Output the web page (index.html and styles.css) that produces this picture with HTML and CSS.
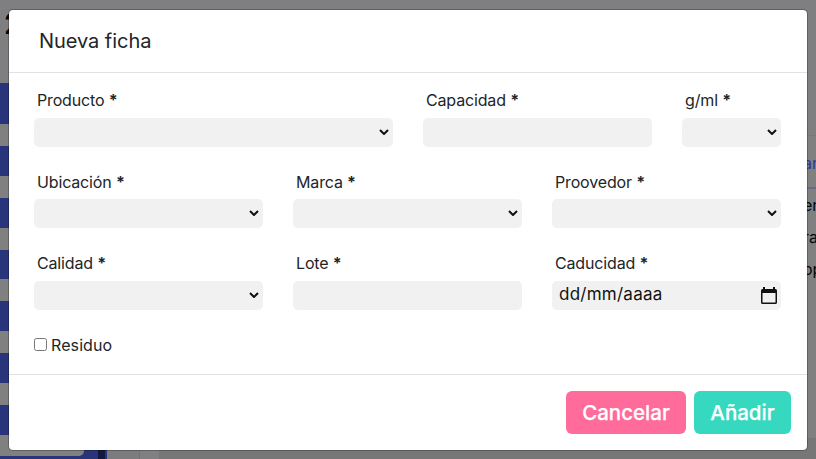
FILE: index.html
```html
<!DOCTYPE html>
<html lang="es">
<head>
<meta charset="utf-8">
<title>Nueva ficha</title>
<link rel="stylesheet" href="styles.css">
</head>
<body>
<div class="page">
  <aside class="sidebar">
    <div class="sidebar-panel">
      <span class="page-mark">2</span>
      <nav class="side-nav">
        <i class="side-link side-link-first"></i><i class="side-link"></i><i class="side-link"></i><i class="side-link"></i><i class="side-link"></i><i class="side-link"></i><i class="side-link"></i>
      </nav>
    </div>
  </aside>
  <main class="content">
    <div class="content-strip"></div>
    <div class="content-main">
      <section class="table-card">
        <div class="table-head">ar</div>
        <div class="table-row">er</div>
        <div class="table-row">ra</div>
        <div class="table-row">op</div>
      </section>
    </div>
  </main>
</div>
<div class="modal">
  <header class="modal-header"><h5 class="modal-title">Nueva ficha</h5></header>
  <form class="modal-body">
    <div class="fields">
      <label class="field wide"><span class="label">Producto <b>*</b></span><span class="control"><svg class="chevron" viewBox="0 0 10 6"><path d="M1 1l4 4 4-4"/></svg></span></label>
      <label class="field"><span class="label">Capacidad <b>*</b></span><span class="control"></span></label>
      <label class="field small"><span class="label">g/ml <b>*</b></span><span class="control"><svg class="chevron" viewBox="0 0 10 6"><path d="M1 1l4 4 4-4"/></svg></span></label>
    </div>
    <div class="fields fields-middle">
      <label class="field"><span class="label">Ubicación <b>*</b></span><span class="control"><svg class="chevron" viewBox="0 0 10 6"><path d="M1 1l4 4 4-4"/></svg></span></label>
      <label class="field"><span class="label">Marca <b>*</b></span><span class="control"><svg class="chevron" viewBox="0 0 10 6"><path d="M1 1l4 4 4-4"/></svg></span></label>
      <label class="field"><span class="label">Proovedor <b>*</b></span><span class="control"><svg class="chevron" viewBox="0 0 10 6"><path d="M1 1l4 4 4-4"/></svg></span></label>
    </div>
    <div class="fields">
      <label class="field"><span class="label">Calidad <b>*</b></span><span class="control"><svg class="chevron" viewBox="0 0 10 6"><path d="M1 1l4 4 4-4"/></svg></span></label>
      <label class="field"><span class="label">Lote <b>*</b></span><span class="control"></span></label>
      <label class="field"><span class="label">Caducidad <b>*</b></span><span class="control"><span class="date">dd/mm/aaaa</span><svg class="calendar" viewBox="0 0 16 18"><path fill-rule="evenodd" d="M2 0h2v2h8V0h2v2h.5Q16 2 16 3.500v12q0 1.500-1.500 1.500h-13Q0 17 0 15.500v-12Q0 2 1.500 2H2zM1.500 6v9.500h13V6z"/></svg></span></label>
    </div>
    <label class="check"><span class="box"></span><span>Residuo</span></label>
  </form>
  <footer class="modal-footer">
    <button class="btn cancel" type="button">Cancelar</button>
    <button class="btn add" type="button">Añadir</button>
  </footer>
</div>
</body>
</html>
```
FILE: styles.css
```css
* { box-sizing: border-box; }
body { margin: 0; width: 816px; height: 459px; overflow: hidden; font-family: Inter, "Liberation Sans", sans-serif; color: #212529; background: #7f7f81; }
.page { display: flex; width: 816px; height: 459px; overflow: hidden; }
.sidebar { flex: none; width: 107px; background: linear-gradient(#7f7f81 83px, transparent 83px), linear-gradient(90deg, #29357a 98px, #12183e 98px, #12183e 105px, #29357a 105px); }
.sidebar-panel { width: 84px; height: 456px; background: linear-gradient(#7f7f81 83px, #808080 83px); border-radius: 0 0 5px 0; }
.page-mark { display: block; height: 83px; padding: 5px 0 0 4px; font-size: 28px; line-height: 38px; font-weight: 600; color: #080808; }
.side-nav { display: flex; flex-direction: column; gap: 22px; }
.side-link { height: 29.800px; background: #29357a; }
.side-link-first { height: 41px; }
.content { flex: 1; display: flex; min-width: 0; }
.content-strip { flex: none; width: 52px; background: linear-gradient(#7f7f81 83px, transparent 83px), linear-gradient(90deg, #7c7c7e 32px, #747476 32px, #747476 33px, #808082 33px); }
.content-main { flex: 1; min-width: 0; background: #777; }
.table-card { height: 438px; padding: 135px 0 0; background: linear-gradient(#7f7f81 135px, #77777c 135px, #77777c 136px, #808080 136px); font-size: 16px; color: #080808; }
.table-head { height: 54px; padding-left: 644px; border-bottom: 2px solid #666b91; line-height: 56px; color: #30379a; white-space: nowrap; }
.table-row { height: 32px; padding-left: 644px; line-height: 33px; white-space: nowrap; }
.modal { position: absolute; left: 8px; top: 9px; width: 800px; height: 442px; display: flex; flex-direction: column; background: #fff; background-clip: padding-box; border: 1px solid rgba(0,0,0,.25); border-radius: 5px; }
.modal-header { height: 63px; padding: 16px 30px; border-bottom: 1px solid #dee2e6; }
.modal-title { margin: 0; font-size: 20px; line-height: 30px; font-weight: 400; letter-spacing: -.05px; }
.modal-body { height: 301px; padding: 15px 26px 0 25px; }
.fields { display: flex; gap: 30px; height: 82px; }
.fields-middle { height: 81px; }
.field { flex: 1; display: flex; flex-direction: column; }
.wide { flex: 0 0 359px; }
.small { flex: 0 0 99px; }
.label { height: 30px; padding-left: 3px; font-size: 16px; line-height: 24px; letter-spacing: -.15px; white-space: nowrap; }
.fields-middle .label { height: 29px; }
.label b { font-weight: 700; letter-spacing: 0; }
.control { height: 29px; display: flex; align-items: center; justify-content: flex-end; border-radius: 5px; background: #f1f1f1; color: #111; }
.chevron { width: 10px; height: 6px; margin: 0 4px 1px 0; fill: none; stroke: #111; stroke-width: 2; }
.date { flex: 1; padding-left: 7px; font-size: 17px; line-height: 25px; height: 27px; letter-spacing: .25px; }
.calendar { width: 16px; height: 18px; margin-right: 4px; fill: #111; }
.check { display: flex; align-items: center; height: 24px; gap: 4px; font-size: 16px; letter-spacing: .1px; }
.box { width: 13px; height: 13px; margin-bottom: 1px; border: 1px solid #767676; border-radius: 2.500px; background: #fff; }
.modal-footer { flex: 1; display: flex; justify-content: flex-end; gap: 8px; padding: 16px 16px 0; border-top: 1px solid #dee2e6; }
.btn { height: 43px; padding: 0; border: 0; border-radius: 6px; font: 500 20.500px/43px Inter, "Liberation Sans", sans-serif; color: #fff; -webkit-text-stroke: .25px #fff; }
.cancel { width: 120px; background: #ff6b9b; }
.add { width: 97px; background: #36d9c0; }
```
